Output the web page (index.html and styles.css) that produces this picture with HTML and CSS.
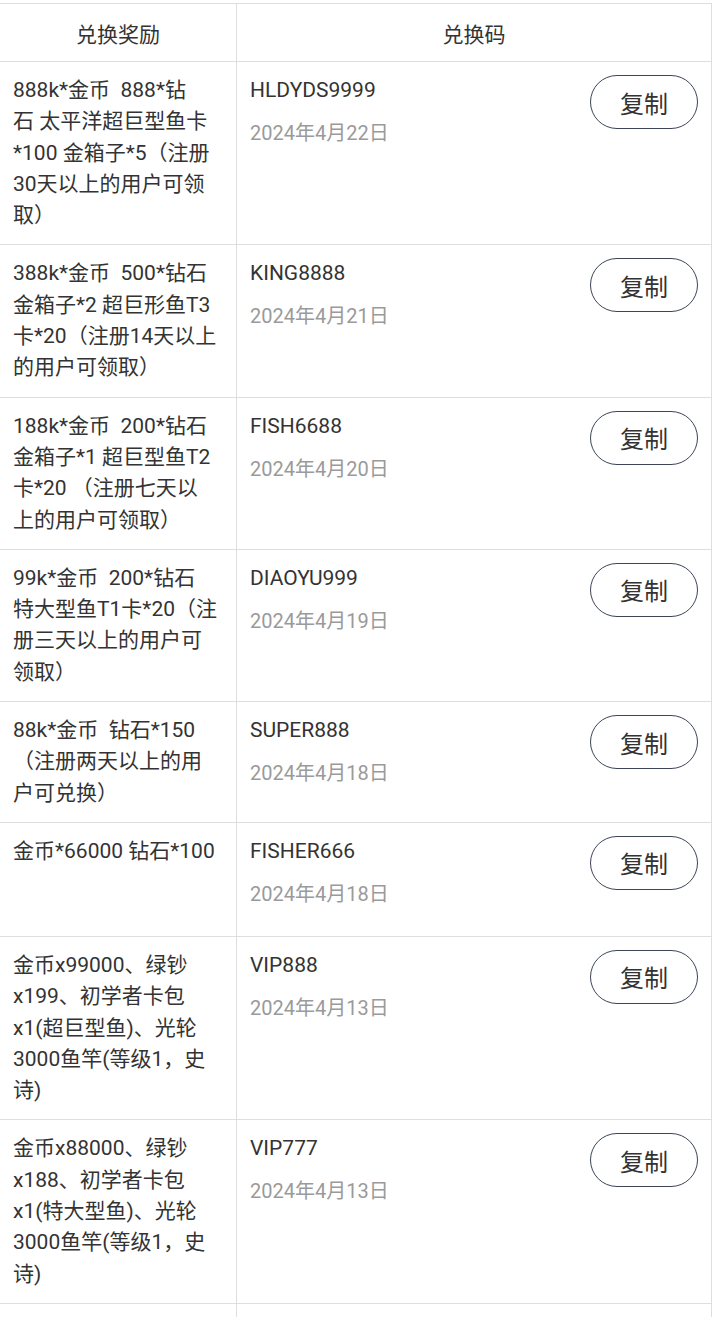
FILE: index.html
```html
<!DOCTYPE html>
<html lang="zh-CN">
<head>
    <meta charset="UTF-8">
    <meta name="viewport" content="width=device-width, initial-scale=1.0">
    <title>兑换码</title>
    <link rel="stylesheet" href="styles.css">
</head>
<body>
    <div class="wrap">
        <table class="code-table">
            <colgroup>
                <col class="col-reward">
                <col class="col-code">
            </colgroup>
            <thead>
                <tr>
                    <th>兑换奖励</th>
                    <th>兑换码</th>
                </tr>
            </thead>
            <tbody>
                <tr>
                    <td class="reward">888k*金币&nbsp; 888*钻<br>石 太平洋超巨型鱼卡<br>*100 金箱子*5（注册<br>30天以上的用户可领<br>取）</td>
                    <td>
                        <div class="code-cell">
                            <div class="code-info">
                                <div class="code">HLDYDS9999</div>
                                <div class="date">2024年4月22日</div>
                            </div>
                            <button class="copy-btn">复制</button>
                        </div>
                    </td>
                </tr>
                <tr>
                    <td class="reward">388k*金币&nbsp; 500*钻石<br>金箱子*2 超巨形鱼T3<br>卡*20（注册14天以上<br>的用户可领取）</td>
                    <td>
                        <div class="code-cell">
                            <div class="code-info">
                                <div class="code">KING8888</div>
                                <div class="date">2024年4月21日</div>
                            </div>
                            <button class="copy-btn">复制</button>
                        </div>
                    </td>
                </tr>
                <tr>
                    <td class="reward">188k*金币&nbsp; 200*钻石<br>金箱子*1 超巨型鱼T2<br>卡*20 （注册七天以<br>上的用户可领取）</td>
                    <td>
                        <div class="code-cell">
                            <div class="code-info">
                                <div class="code">FISH6688</div>
                                <div class="date">2024年4月20日</div>
                            </div>
                            <button class="copy-btn">复制</button>
                        </div>
                    </td>
                </tr>
                <tr>
                    <td class="reward">99k*金币&nbsp; 200*钻石<br>特大型鱼T1卡*20（注<br>册三天以上的用户可<br>领取）</td>
                    <td>
                        <div class="code-cell">
                            <div class="code-info">
                                <div class="code">DIAOYU999</div>
                                <div class="date">2024年4月19日</div>
                            </div>
                            <button class="copy-btn">复制</button>
                        </div>
                    </td>
                </tr>
                <tr>
                    <td class="reward">88k*金币&nbsp; 钻石*150<br>（注册两天以上的用<br>户可兑换）</td>
                    <td>
                        <div class="code-cell">
                            <div class="code-info">
                                <div class="code">SUPER888</div>
                                <div class="date">2024年4月18日</div>
                            </div>
                            <button class="copy-btn">复制</button>
                        </div>
                    </td>
                </tr>
                <tr>
                    <td class="reward">金币*66000 钻石*100</td>
                    <td>
                        <div class="code-cell">
                            <div class="code-info">
                                <div class="code">FISHER666</div>
                                <div class="date">2024年4月18日</div>
                            </div>
                            <button class="copy-btn">复制</button>
                        </div>
                    </td>
                </tr>
                <tr>
                    <td class="reward">金币x99000、绿钞<br>x199、初学者卡包<br>x1(超巨型鱼)、光轮<br>3000鱼竿(等级1，史<br>诗)</td>
                    <td>
                        <div class="code-cell">
                            <div class="code-info">
                                <div class="code">VIP888</div>
                                <div class="date">2024年4月13日</div>
                            </div>
                            <button class="copy-btn">复制</button>
                        </div>
                    </td>
                </tr>
                <tr>
                    <td class="reward">金币x88000、绿钞<br>x188、初学者卡包<br>x1(特大型鱼)、光轮<br>3000鱼竿(等级1，史<br>诗)</td>
                    <td>
                        <div class="code-cell">
                            <div class="code-info">
                                <div class="code">VIP777</div>
                                <div class="date">2024年4月13日</div>
                            </div>
                            <button class="copy-btn">复制</button>
                        </div>
                    </td>
                </tr>
                <tr>
                    <td class="reward">金币x66000、绿钞<br>x166、初学者卡包<br>x1(大型鱼)</td>
                    <td>
                        <div class="code-cell">
                            <div class="code-info">
                                <div class="code">VIP666</div>
                                <div class="date">2024年4月12日</div>
                            </div>
                            <button class="copy-btn">复制</button>
                        </div>
                    </td>
                </tr>
            </tbody>
        </table>
    </div>
</body>
</html>
```

FILE: styles.css
```css
body {
    margin: 0;
    font-family: Roboto, "Noto Sans CJK SC", sans-serif;
    color: #333;
    background: #fff;
}
.wrap {
    padding-top: 3px;
    margin-left: -1px;
}
.code-table {
    width: 713px;
    table-layout: fixed;
    border-collapse: collapse;
}
.col-reward {
    width: 237px;
}
.code-table th,
.code-table td {
    border: 1px solid #dedede;
    vertical-align: top;
}
.code-table th {
    height: 57px;
    padding: 0;
    font-size: 21px;
    font-weight: normal;
    text-align: center;
    vertical-align: middle;
}
.code-table td {
    padding: 13px;
}
.code-table td.reward {
    padding: 13px 4px 13px 13px;
    font-size: 21px;
    line-height: 31.3px;
    white-space: nowrap;
}
.code-cell {
    display: flex;
    justify-content: space-between;
    align-items: flex-start;
}
.code {
    font-size: 21px;
    line-height: 31px;
}
.date {
    margin-top: 12px;
    margin-bottom: 13px;
    font-size: 20px;
    line-height: 31px;
    color: #9a9a9a;
}
.copy-btn {
    width: 108px;
    height: 54px;
    border: 1.5px solid #3b4556;
    border-radius: 27px;
    background: #fff;
    font-family: "Noto Sans CJK SC", sans-serif;
    font-size: 24px;
    color: #333;
    padding: 0;
}
```
